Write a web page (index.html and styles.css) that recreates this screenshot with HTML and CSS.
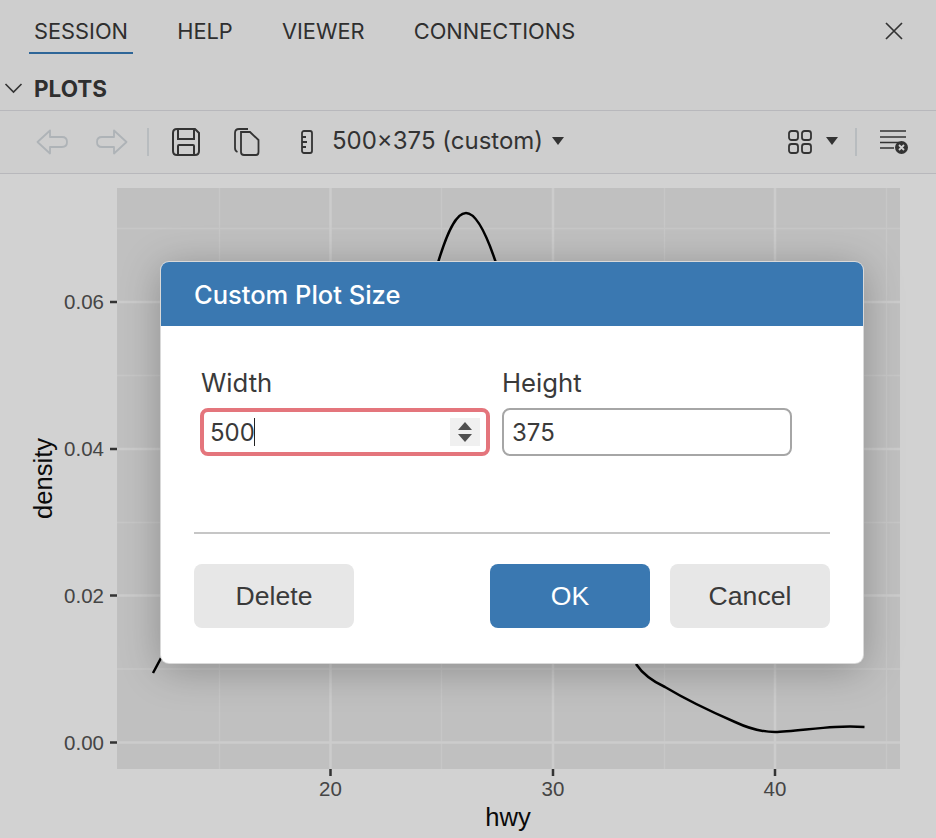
FILE: index.html
```html
<!DOCTYPE html>
<html lang="en">
<head>
    <meta charset="UTF-8">
    <title>Custom Plot Size</title>
    <link rel="stylesheet" href="styles.css">
</head>
<body>
    <div class="app">
        <div class="tabs">
            <a class="tab active">SESSION</a>
            <a class="tab">HELP</a>
            <a class="tab">VIEWER</a>
            <a class="tab">CONNECTIONS</a>
            <svg class="close" width="20" height="20" viewBox="0 0 20 20"><path d="M2 2 18 18M18 2 2 18" fill="none" stroke="#333" stroke-width="1.7"/></svg>
        </div>
        <div class="section">
            <svg width="20" height="12" viewBox="0 0 20 12"><path d="M1.5 2 9.5 10 17.5 2" fill="none" stroke="#333" stroke-width="1.6"/></svg>
            <span>PLOTS</span>
        </div>
        <div class="toolbar">
            <svg class="ico-back" width="32" height="26" viewBox="0 0 32 26"><path d="M14 1.5 1.5 13 14 24.5V18H26Q31 18 31 13T26 8H14Z" fill="none" stroke="#aeb3b7" stroke-width="1.8" stroke-linejoin="round"/></svg>
            <svg class="ico-fwd" width="32" height="26" viewBox="0 0 32 26"><path d="M18 1.5 30.500 13 18 24.500V18H6Q1 18 1 13T6 8H18Z" fill="none" stroke="#aeb3b7" stroke-width="1.8" stroke-linejoin="round"/></svg>
            <i class="sep sep-a"></i>
            <svg class="ico-save" width="28" height="28" viewBox="0 0 28 28"><g fill="none" stroke="#333" stroke-width="2"><path d="M5 1H23L27 5V23Q27 27 23 27H5Q1 27 1 23V5Q1 1 5 1Z"/><path d="M6 1V11H22V1"/><path d="M6 27V18Q6 17 7 17H21Q22 17 22 18V27"/></g></svg>
            <svg class="ico-copy" width="26" height="28" viewBox="0 0 26 28"><g fill="none" stroke="#333" stroke-width="1.8"><path d="M7 4H16L24.500 12V24Q24.500 27 22 27H10Q7 27 7 24Z"/><path d="M3.500 24Q1 23 1 20V5Q1 1 5 1H14"/></g></svg>
            <svg class="ico-ruler" width="12" height="24" viewBox="0 0 12 24"><g fill="none" stroke="#333" stroke-width="1.800"><rect x="1" y="1" width="10" height="22" rx="2"/><path d="M1 7H5M1 12H6M1 17H5"/></g></svg>
            <span class="size-label">500×375 (custom)</span>
            <i class="caret caret-a"></i>
            <svg class="ico-grid" width="24" height="24" viewBox="0 0 24 24"><g fill="none" stroke="#333" stroke-width="1.800"><rect x="1" y="1" width="9" height="9" rx="2.500"/><rect x="14" y="1" width="9" height="9" rx="2.500"/><rect x="1" y="14" width="9" height="9" rx="2.500"/><rect x="14" y="14" width="9" height="9" rx="2.500"/></g></svg>
            <i class="caret caret-b"></i>
            <i class="sep sep-b"></i>
            <svg class="ico-clear" width="29" height="26" viewBox="0 0 29 26"><path d="M0 2H26M0 8H26M0 13.500H19M0 19H14" fill="none" stroke="#333" stroke-width="1.700"/><circle cx="21.500" cy="18.500" r="6.500" fill="#333"/><path d="M19 16 24 21M24 16 19 21" stroke="#d0d0d0" stroke-width="1.800"/></svg>
        </div>
        <div class="plot">
            <svg class="chart" width="936" height="664" viewBox="0 174 936 664">
                <rect x="117" y="188" width="783" height="581" fill="#c0c0c0"/>
                <g stroke="#c7c7c7" stroke-width="1.300">
                    <path d="M219.500 188V769M441.500 188V769M664.500 188V769M886.500 188V769"/>
                    <path d="M117 228.500H900M117 375.500H900M117 522.500H900M117 669H900"/>
                </g>
                <g stroke="#cccccc" stroke-width="2.500">
                    <path d="M330.500 188V769M553 188V769M775 188V769"/>
                    <path d="M117 302H900M117 449H900M117 595.500H900M117 742.500H900"/>
                </g>
                <g stroke="#333" stroke-width="2.500">
                    <path d="M110 302H117M110 449H117M110 595.500H117M110 742.500H117"/>
                    <path d="M330.500 769V776M553 769V776M775 769V776"/>
                </g>
                <path d="M153 673 161 658M437 266C447 232 456 213 466 213C476 213 486 232 497 266M636 664C642 673 652 681 665 687C680 696 705 709 735 722C750 729 762 732 775 732C790 732 815 728 835 727C845 726.500 855 726.500 864.500 727" fill="none" stroke="#000" stroke-width="2.500"/>
                <g class="tick-text">
                    <text x="104" y="309" text-anchor="end">0.06</text>
                    <text x="104" y="456" text-anchor="end">0.04</text>
                    <text x="104" y="603" text-anchor="end">0.02</text>
                    <text x="104" y="750" text-anchor="end">0.00</text>
                    <text x="330.500" y="796" text-anchor="middle">20</text>
                    <text x="553" y="796" text-anchor="middle">30</text>
                    <text x="775" y="796" text-anchor="middle">40</text>
                </g>
                <g class="axis-title">
                    <text x="508" y="826" text-anchor="middle">hwy</text>
                    <text transform="translate(52 478.500) rotate(-90)" text-anchor="middle">density</text>
                </g>
            </svg>
        </div>

        <div class="modal">
            <div class="modal-head">Custom Plot Size</div>
            <div class="modal-body">
                <div class="fields">
                    <div class="field">
                        <label>Width</label>
                        <div class="input focus">500<i class="cursor"></i><span class="spin"><b class="up"></b><b class="down"></b></span></div>
                    </div>
                    <div class="field">
                        <label>Height</label>
                        <div class="input">375</div>
                    </div>
                </div>
                <div class="modal-foot">
                    <button class="btn">Delete</button>
                    <button class="btn primary push">OK</button>
                    <button class="btn">Cancel</button>
                </div>
            </div>
        </div>
    </div>
</body>
</html>
```

FILE: styles.css
```css
html, body {
    margin: 0;
    padding: 0;
}
body {
    font-family: Inter, "Noto Sans", sans-serif;
    color: #333;
    background: #d2d2d2;
    overflow: hidden;
}
.app {
    position: relative;
    width: 936px;
    height: 838px;
    overflow: hidden;
}
.tabs {
    display: flex;
    align-items: flex-start;
    height: 66px;
    padding-left: 29px;
    background: #cecece;
    font-size: 21.8px;
    color: #2f2f2f;
}
.tab {
    height: 36px;
    margin-top: 16px;
    margin-right: 39.2px;
    padding: 0 5px;
    line-height: 30px;
}
.tab.active {
    border-bottom: 2px solid #2e6698;
}
.close {
    margin-left: auto;
    margin-right: 32px;
    margin-top: 21px;
}
.section {
    display: flex;
    align-items: center;
    gap: 10px;
    height: 44px;
    padding-left: 4px;
    background: #cecece;
    border-bottom: 1px solid #b8b8bc;
    font-size: 22.5px;
    font-weight: 700;
    color: #2f2f2f;
}
.toolbar {
    display: flex;
    align-items: center;
    height: 62px;
    background: #cecece;
    border-bottom: 1px solid #b8b8bc;
    padding-left: 36px;
}
.toolbar svg {
    flex: none;
}
.ico-fwd { margin-left: 28px; }
.sep {
    display: block;
    width: 2px;
    height: 28px;
    background: #b8bcbf;
}
.sep-a { margin-left: 19px; }
.ico-save { margin-left: 23px; }
.ico-copy { margin-left: 34px; }
.ico-ruler { margin-left: 41px; }
.size-label {
    margin-left: 19px;
    margin-top: -3px;
    font-size: 24px;
}
.caret {
    display: block;
    width: 0;
    height: 0;
    border-left: 6px solid transparent;
    border-right: 6px solid transparent;
    border-top: 8px solid #333;
}
.caret-a { margin-left: 9px; margin-top: -2px; }
.ico-grid { margin-left: auto; }
.caret-b { margin-left: 14px; margin-top: -2px; }
.sep-b { margin-left: 17px; }
.ico-clear { margin-left: 23px; margin-right: 27px; }
.plot {
    height: 664px;
    background: #d2d2d2;
}
.chart {
    display: block;
}
.tick-text text {
    font-family: "Liberation Sans", Arial, sans-serif;
    font-size: 20.5px;
    fill: #454545;
}
.axis-title text {
    font-family: "Liberation Sans", Arial, sans-serif;
    font-size: 25.6px;
    fill: #0a0a0a;
}
.modal {
    position: absolute;
    left: 161px;
    top: 262px;
    width: 702px;
    height: 401px;
    background: #fff;
    border-radius: 8px;
    overflow: hidden;
    box-shadow: 0 0 0 1px #d9d9d9, 0 6px 40px rgba(0, 0, 0, 0.28);
}
.modal-head {
    height: 64px;
    padding-left: 33px;
    background: #3a78b1;
    color: #fff;
    font-size: 25.5px;
    font-weight: 500;
    line-height: 66px;
}
.modal-body {
    padding: 40px 33px 0;
}
.fields {
    display: flex;
    gap: 12px;
    padding: 0 7px;
    height: 168px;
    border-bottom: 2px solid #c6c6c6;
    margin-bottom: 30px;
    box-sizing: border-box;
}
.field label {
    display: block;
    height: 42px;
    font-size: 25.7px;
    line-height: 34px;
    color: #3a3a3a;
}
.input {
    display: flex;
    align-items: center;
    width: 290px;
    height: 48px;
    box-sizing: border-box;
    border: 2px solid #a6a6a6;
    border-radius: 8px;
    padding-left: 8px;
    font-size: 24px;
    color: #3a3a3a;
}
.input.focus {
    width: 290px;
    margin-left: -1px;
    border: 4px solid #e4757c;
    padding-left: 6px;
}
.cursor {
    display: block;
    width: 1.5px;
    height: 28px;
    margin-left: -1px;
    background: #222;
}
.spin {
    display: flex;
    flex-direction: column;
    align-items: center;
    justify-content: center;
    gap: 4px;
    width: 30px;
    height: 28px;
    margin-left: auto;
    margin-right: 6px;
    background: #f0f0f0;
}
.spin b {
    display: block;
    width: 0;
    height: 0;
    border-left: 7.5px solid transparent;
    border-right: 7.5px solid transparent;
}
.spin .up { border-bottom: 8px solid #505050; }
.spin .down { border-top: 8px solid #505050; }
.modal-foot {
    display: flex;
    gap: 20px;
}
.btn {
    width: 160px;
    height: 64px;
    border: none;
    border-radius: 8px;
    background: #e7e7e7;
    color: #3a3a3a;
    font-family: "Liberation Sans", Arial, sans-serif;
    font-size: 26.6px;
}
.btn.primary {
    background: #3a78b1;
    color: #fff;
}
.push {
    margin-left: auto;
}
```
